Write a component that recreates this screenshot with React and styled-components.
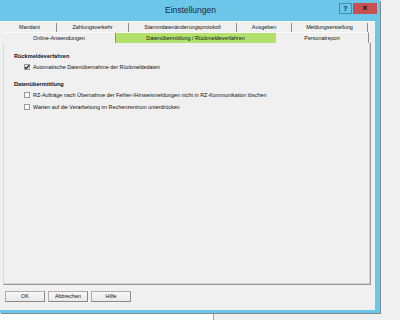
import React from 'react'
import styled, { createGlobalStyle } from 'styled-components'

const Global = createGlobalStyle`
    html, body { margin: 0; padding: 0; background: #f0f0f0; }
    body { font-family: "Liberation Sans", Arial, sans-serif; }
`

const topTabs = [
    { label: 'Mandant', width: 54 },
    { label: 'Zahlungsverkehr', width: 72 },
    { label: 'Stammdatenänderungsprotokoll', width: 108 },
    { label: 'Ausgeben', width: 55 },
    { label: 'Meldungserstellung', width: 76 },
]

const bottomTabs = [
    { label: 'Online-Anwendungen', width: 113 },
    { label: 'Datenübermittlung / Rückmeldeverfahren', width: 160, active: true },
    { label: 'Personalreport', width: 93 },
]

function Check({ checked }) {
    return (
        <Box $checked={checked}>
            {checked && (
                <svg width="6" height="6" viewBox="0 0 6 6">
                    <path d="M0.8 3.1 L2.3 4.6 L5.2 1.2" fill="none" stroke="#222" strokeWidth="1.3" />
                </svg>
            )}
        </Box>
    )
}

function Option({ checked, children }) {
    return (
        <OptionRow>
            <Check checked={checked} />
            <span>{children}</span>
        </OptionRow>
    )
}

export default function App() {
    return (
        <Screen>
            <Global />
            <Top>
                <Window>
                    <TitleBar>
                        <span />
                        <Title>Einstellungen</Title>
                        <Controls>
                            <HelpButton>?</HelpButton>
                            <CloseButton>×</CloseButton>
                        </Controls>
                    </TitleBar>
                    <Client>
                        <TabRow $first>
                            {topTabs.map(t => (
                                <Tab key={t.label} $w={t.width} $top>{t.label}</Tab>
                            ))}
                        </TabRow>
                        <TabRow>
                            {bottomTabs.map(t => (
                                <Tab key={t.label} $w={t.width} $active={t.active}>{t.label}</Tab>
                            ))}
                        </TabRow>
                        <Panel>
                            <Section>
                                <Heading>Rückmeldeverfahren</Heading>
                                <Option checked>Automatische Datenübernahme der Rückmeldedaten</Option>
                            </Section>
                            <Section $gap>
                                <Heading>Datenübermittlung</Heading>
                                <Option>RZ-Aufträge nach Übernahme der Fehler-/Hinweismeldungen nicht in RZ-Kommunikation löschen</Option>
                                <Option>Warten auf die Verarbeitung im Rechenzentrum unterdrücken</Option>
                            </Section>
                        </Panel>
                        <ButtonBar>
                            <Button>OK</Button>
                            <Button>Abbrechen</Button>
                            <Button>Hilfe</Button>
                        </ButtonBar>
                    </Client>
                </Window>
            </Top>
            <Below>
                <BehindWindow />
            </Below>
        </Screen>
    )
}

const Screen = styled.div`
    width: 400px;
    height: 320px;
    overflow: hidden;
    background: #f0f0f0;
    display: flex;
    flex-direction: column;
`

const Top = styled.div`
    display: flex;
`

const Window = styled.div`
    width: 380px;
    height: 313px;
    background: #6bc6ea;
    box-shadow: 1px 1px 0 #7d8a90;
    display: flex;
    flex-direction: column;
`

const TitleBar = styled.div`
    height: 21px;
    display: grid;
    grid-template-columns: 1fr auto 1fr;
    align-items: start;
`

const Title = styled.div`
    font-size: 8.5px;
    line-height: 21px;
    color: #1f2a33;
    padding-left: 1px;
`

const Controls = styled.div`
    display: flex;
    justify-content: flex-end;
    padding-top: 3px;
    padding-right: 3px;
`

const HelpButton = styled.div`
    width: 13px;
    height: 11px;
    box-sizing: border-box;
    border: 1px solid #3f8fb3;
    font-size: 7px;
    font-weight: bold;
    line-height: 9px;
    text-align: center;
    color: #1b2a33;
`

const CloseButton = styled.div`
    width: 24px;
    height: 11px;
    margin-left: 1px;
    background: #c75050;
    font-size: 9px;
    font-weight: bold;
    line-height: 10px;
    text-align: center;
    color: #2a1010;
`

const Client = styled.div`
    flex: 1;
    margin-right: 5px;
    margin-bottom: 3px;
    background: #f0f0f0;
    border-top: 1px solid #fafafa;
    padding-left: 3px;
    display: flex;
    flex-direction: column;
`

const TabRow = styled.div`
    display: flex;
    height: ${p => (p.$first ? '10px' : '11px')};
`

const Tab = styled.div`
    width: ${p => p.$w}px;
    box-sizing: border-box;
    flex: none;
    font-size: 5.4px;
    color: #111;
    text-align: center;
    white-space: nowrap;
    line-height: ${p => (p.$top ? '9px' : '11px')};
    margin-top: ${p => (p.$top ? '1px' : '0')};
    background: ${p => (p.$active ? '#b3df6c' : 'transparent')};
    border-right: 1px solid ${p => (p.$active ? '#b3df6c' : '#8e8e8e')};
    border-top: ${p => (p.$top ? 'none' : '1px solid #fbfbfb')};
    line-height: ${p => (p.$top ? '9px' : '10px')};
`

const Panel = styled.div`
    height: 242px;
    width: 368px;
    box-sizing: border-box;
    border-left: 1px solid #dadada;
    border-right: 1px solid #9a9a9a;
    border-bottom: 1px solid #9a9a9a;
    box-shadow: inset -1px -1px 0 #d4d4d4;
    padding: 9px 0 0 10px;
`

const Section = styled.div`
    display: flex;
    flex-direction: column;
    margin-top: ${p => (p.$gap ? '7px' : '0')};
`

const Heading = styled.div`
    font-size: 5.6px;
    font-weight: bold;
    line-height: 9px;
    color: #111;
`

const OptionRow = styled.div`
    display: flex;
    align-items: center;
    height: 12px;
    padding-left: 10px;
    font-size: 5.4px;
    color: #111;
    white-space: nowrap;
`

const Box = styled.div`
    width: 6px;
    height: 6px;
    box-sizing: border-box;
    border: 1px solid #9a9a9a;
    background: ${p => (p.$checked ? '#e6e6e6' : '#fbfbfb')};
    margin-right: 3px;
    display: flex;
    align-items: center;
    justify-content: center;
    svg { flex: none; }
`

const ButtonBar = styled.div`
    display: flex;
    gap: 3px;
    padding: 6px 0 0 2px;
`

const Button = styled.div`
    width: 40px;
    height: 11px;
    box-sizing: border-box;
    border: 1px solid #adadad;
    border-right-color: #8a8a8a;
    border-bottom-color: #8a8a8a;
    background: linear-gradient(#f8f8f8, #e8e8e8);
    font-size: 5.4px;
    line-height: 9px;
    text-align: center;
    color: #111;
`

const Below = styled.div`
    flex: 1;
    margin-top: 1px;
    display: flex;
`

const BehindWindow = styled.div`
    width: 213px;
    background: #ffffff;
    border-right: 1px solid #a5a5a5;
`
